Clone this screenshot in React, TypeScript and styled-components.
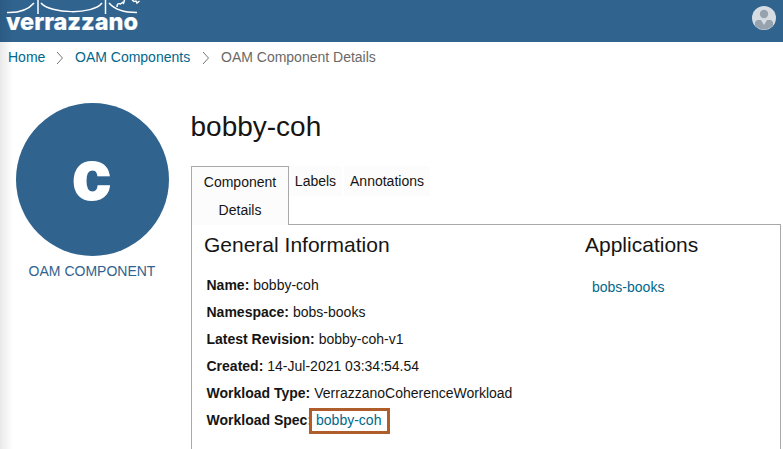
import React from "react";
import styled, { createGlobalStyle } from "styled-components";

const GlobalStyle = createGlobalStyle`
  * { box-sizing: border-box; }
  html, body { margin: 0; overflow: hidden; background: #fff; }
  body { font: 14px/20px "Liberation Sans", Arial, sans-serif; color: #161513; }
  h1, h2, p, ul, ol { margin: 0; padding: 0; font-weight: 400; list-style: none; }
`;

const Page = styled.div`
  display: flex;
  flex-direction: column;
  width: 783px;
  height: 449px;
  overflow: hidden;
  position: relative;
`;

const EdgeShadow = styled.div`
  position: absolute;
  inset: 0 auto 0 0;
  width: 13px;
  background: linear-gradient(to right, rgba(0, 0, 0, 0.09), rgba(0, 0, 0, 0.05) 40%, transparent);
  pointer-events: none;
`;

const Header = styled.header`
  display: flex;
  flex: none;
  justify-content: space-between;
  height: 42px;
  padding-right: 7px;
  background: #30638e;
`;

const Logo = styled.svg`
  display: block;
  text {
    font-family: Inter, sans-serif;
    font-size: 24px;
    font-weight: 800;
    fill: #fff;
    stroke: #fff;
    stroke-width: 0.2px;
  }
`;

const Avatar = styled.svg`
  display: block;
  margin-top: 6px;
`;

const Breadcrumbs = styled.nav`
  display: flex;
  flex: none;
  align-items: center;
  height: 30px;
  padding-left: 8px;
`;

const Link = styled.a`
  color: #00688c;
  text-decoration: none;
`;

const Crumb = styled(Link)<{ $width: number; $current?: boolean }>`
  flex: none;
  width: ${(p) => p.$width}px;
  white-space: nowrap;
  color: ${(p) => (p.$current ? "#6b6966" : "#00688c")};
`;

const Chevron = styled.svg`
  flex: none;
  margin: 2px 11px 0;
`;

const Main = styled.main`
  display: flex;
  flex: 1;
  min-height: 0;
`;

const Side = styled.aside`
  display: flex;
  flex-direction: column;
  align-items: center;
  width: 153px;
  margin: 31px 22px 0 15.5px;
  color: #30638e;
`;

const Badge = styled.div`
  display: flex;
  align-items: center;
  justify-content: center;
  width: 153px;
  height: 153px;
  padding: 0 1px 9px 0;
  margin-bottom: 5px;
  border-radius: 50%;
  background: #30638e;
  color: #fff;
  font-size: 68px;
  font-weight: 700;
  -webkit-text-stroke: 3px #fff;
`;

const Content = styled.section`
  display: flex;
  flex-direction: column;
  flex: none;
  width: 590.5px;
`;

const Title = styled.h1`
  height: 94px;
  padding-top: 39px;
  font-size: 28px;
  line-height: 32px;
`;

const Tabs = styled.div`
  display: flex;
  align-items: flex-start;
  margin-left: 0.5px;
  height: 58px;
`;

const Tab = styled.button<{ $width: number; $active?: boolean }>`
  position: relative;
  z-index: 1;
  flex: none;
  width: ${(p) => p.$width}px;
  height: ${(p) => (p.$active ? 59 : 30)}px;
  margin-right: ${(p) => (p.$active ? 0 : 2)}px;
  padding: ${(p) => (p.$active ? "0 8px 1px" : "0 0 1px")};
  border: solid #a9a9a9;
  border-width: ${(p) => (p.$active ? "1px 1px 0" : "0")};
  background: #fcfcfc;
  color: inherit;
  font: inherit;
  line-height: 28px;
`;

const Panel = styled.div`
  display: flex;
  flex: 1;
  margin-left: 0.5px;
  padding: 7px 0 0 12px;
  border: 1px solid #a9a9a9;
  border-bottom: 0;
`;

const Column = styled.div<{ $width: number }>`
  width: ${(p) => p.$width}px;
`;

const Heading = styled.h2`
  font-size: 21px;
  line-height: 25px;
`;

const Facts = styled.ul`
  padding: 14px 0 0 2.5px;
`;

const Fact = styled.li`
  display: flex;
  align-items: center;
  gap: 4px;
  height: 27px;
  white-space: nowrap;
`;

const Highlight = styled.span`
  display: flex;
  align-items: center;
  width: 81px;
  height: 26px;
  margin: 2px 0 0 -7px;
  padding: 0 0 2px 4px;
  border: 3px solid #b05d2c;
`;

const AppLink = styled(Link)`
  display: block;
  padding: 20px 0 0 7px;
`;

const facts = [
  ["Name:", "bobby-coh"],
  ["Namespace:", "bobs-books"],
  ["Latest Revision:", "bobby-coh-v1"],
  ["Created:", "14-Jul-2021 03:34:54.54"],
  ["Workload Type:", "VerrazzanoCoherenceWorkload"],
];

const Separator = () => (
  <Chevron width="8" height="14" viewBox="0 0 8 14" fill="none" stroke="#77757a">
    <path d="M1 1l5.5 6L1 13" />
  </Chevron>
);

export default function App() {
  return (
    <Page>
      <GlobalStyle />
      <Header>
        <Logo width="160" height="42" viewBox="0 0 160 42" aria-label="verrazzano">
          <g fill="none" stroke="#fff" strokeWidth="1.5">
            <path d="M7 12.5C20 13 28 10 34 3M41 3C50 14 93 15 102 3M109 3C115 10 124 12.5 137 12.5" />
            <path d="M38 0V14M105.500 0V14" />
            <path d="M117 7c0-3 1-4 3.500-3l2-1.500 1 .8 1-3.300M132 0l2 1.500 2-.5 1 2 2.500-2" />
          </g>
          <text x="6" y="30" textLength="132" lengthAdjust="spacingAndGlyphs">verrazzano</text>
        </Logo>
        <Avatar width="25" height="25" viewBox="0 0 25 25">
          <circle cx="13" cy="12" r="12" fill="#d5dce2" />
          <circle cx="13" cy="8" r="4.200" fill="#96a3af" />
          <path d="M4 19.500V16l2-2h4l3 5 3-5h4l2 2v3.500A12 12 0 0 1 4 19.500z" fill="#96a3af" />
        </Avatar>
      </Header>
      <Breadcrumbs>
        <Crumb $width={37}>Home</Crumb>
        <Separator />
        <Crumb $width={116}>OAM Components</Crumb>
        <Separator />
        <Crumb $width={156} $current>OAM Component Details</Crumb>
      </Breadcrumbs>
      <Main>
        <Side>
          <Badge>c</Badge>
          OAM COMPONENT
        </Side>
        <Content>
          <Title>bobby-coh</Title>
          <Tabs>
            <Tab $width={98} $active>Component Details</Tab>
            <Tab $width={53}>Labels</Tab>
            <Tab $width={86}>Annotations</Tab>
          </Tabs>
          <Panel>
            <Column $width={381}>
              <Heading>General Information</Heading>
              <Facts>
                {facts.map(([label, value]) => (
                  <Fact key={label}><strong>{label}</strong><span>{value}</span></Fact>
                ))}
                <Fact>
                  <strong>Workload Spec:</strong>
                  <Highlight><Link>bobby-coh</Link></Highlight>
                </Fact>
              </Facts>
            </Column>
            <Column $width={190}>
              <Heading>Applications</Heading>
              <AppLink>bobs-books</AppLink>
            </Column>
          </Panel>
        </Content>
      </Main>
      <EdgeShadow />
    </Page>
  );
}
